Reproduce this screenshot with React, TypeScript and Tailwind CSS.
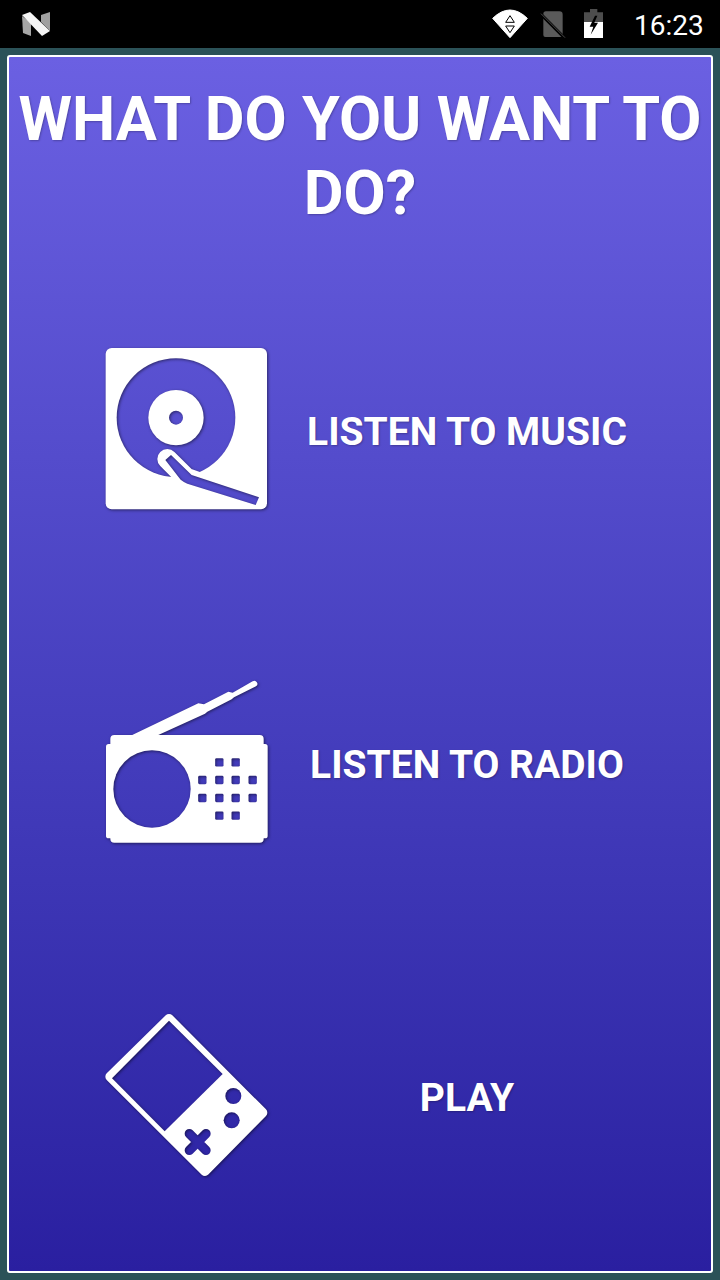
const ROBOTO = { fontFamily: 'Roboto, sans-serif' };

function StatusIcons() {
  return (
    <svg width="240" height="48" viewBox="0 0 720 144" className="absolute right-0 top-0">
      {/* wifi */}
      <path d="M38 55 Q90 5 142 55 L90 113 Z" fill="#fff" stroke="#fff" strokeWidth="3" strokeLinejoin="round" />
      <path d="M90 47 L103 67 H77 Z M77 78 H103 L90 98 Z" fill="none" stroke="#000" strokeWidth="3" />
      {/* no sim */}
      <path d="M190 42 a8 8 0 0 1 8 -8 H238 a10 10 0 0 1 10 10 V105 a6 6 0 0 1 -6 6 H196 a6 6 0 0 1 -6 -6 Z" fill="#5a5a5a" />
      <path d="M181 41 L255 115" stroke="#000" strokeWidth="9" />
      <path d="M183 41 L255 113" stroke="#4a4a4a" strokeWidth="3" />
      {/* battery */}
      <path d="M312 37 H330 V27 H352 V37 H369 V114 H312 Z" fill="#4d4d4d" />
      <path d="M312 66 H369 V114 H312 Z" fill="#fff" />
      <path d="M345 47 L329 80 H340 L332 104 L354 68 H343 L352 47 Z" fill="#000" />
    </svg>
  );
}

function NLogo() {
  return (
    <svg width="30" height="26" viewBox="0 0 30 26" className="absolute left-[21px] top-[11px]">
      <path d="M1 5 L10 12 V25 L2 22 Z" fill="#a6a6a6" />
      <path d="M1 4 L9 1 L29 20 L21 25 Z" fill="#f5f5f5" />
      <path d="M20 4 L29 1 V20 L20 11 Z" fill="#a0a0a0" />
    </svg>
  );
}

function MusicIcon() {
  return (
    <svg width="165" height="165" viewBox="45 36 495 495" className="shrink-0 drop-shadow-[1px_1px_1.5px_rgba(0,0,0,0.5)]">
      <mask id="deck">
        <rect x="0" y="0" width="600" height="600" fill="#fff" />
        <circle cx="258" cy="248" r="178" fill="#000" />
        <circle cx="258" cy="248" r="83" fill="#fff" />
        <circle cx="258" cy="248" r="21" fill="#000" />
        <path d="M232 372 L288 428 L345 448 L530 510" fill="none" stroke="#fff" strokeWidth="60" strokeLinecap="round" strokeLinejoin="round" />
        <path d="M226 375 L243 360 L305 420 L507 487 L497 510 L292 446 Q282 442 272 434 Z" fill="#000" />
      </mask>
      <rect x="47" y="39" width="484" height="484" rx="18" fill="#fff" mask="url(#deck)" />
    </svg>
  );
}

const GRILLE = [
  [388, 277], [437, 277],
  [337, 330], [388, 330], [437, 330], [488, 330],
  [337, 384], [388, 384], [437, 384], [488, 384],
  [388, 437], [437, 437],
];

function RadioIcon() {
  return (
    <svg width="165" height="165" viewBox="45 30 495 495" className="shrink-0 drop-shadow-[1px_1px_1.5px_rgba(0,0,0,0.5)]">
      <mask id="radio-holes">
        <rect x="0" y="0" width="600" height="600" fill="#fff" />
        <circle cx="186" cy="357" r="116" fill="#000" />
        {GRILLE.map(([x, y]) => (
          <rect key={`${x}-${y}`} x={x - 12.5} y={y - 12.5} width="25" height="25" rx="4" fill="#000" />
        ))}
      </mask>
      <path d="M122 197 L325 100 L342 103 L415 65 L428 68 L488 34 A9 9 0 0 1 498 49 L432 82 L425 88 L352 125 L345 131 L200 197 Z" fill="#fff" />
      <g mask="url(#radio-holes)" fill="#fff">
        <rect x="61" y="195" width="460" height="323" rx="12" />
        <rect x="48" y="222" width="485" height="283" rx="8" />
      </g>
    </svg>
  );
}

function GameIcon() {
  return (
    <svg width="165" height="165" viewBox="45 39 495 495" className="shrink-0 drop-shadow-[1px_1px_1.5px_rgba(0,0,0,0.5)]">
      <mask id="game-holes">
        <rect x="0" y="0" width="600" height="600" fill="#fff" />
        <path d="M237 62 L398 222 L224 394 L66 235 Z" fill="#000" />
        <circle cx="430" cy="288" r="24" fill="#000" />
        <circle cx="425" cy="361" r="24" fill="#000" />
        <path d="M298 401 L348 451 M348 401 L298 451" stroke="#000" strokeWidth="28" strokeLinecap="round" />
      </mask>
      <path d="M237 56 L518 338 L345 514 L60 230 Z" fill="#fff" stroke="#fff" strokeWidth="28" strokeLinejoin="round" mask="url(#game-holes)" />
    </svg>
  );
}

const ROWS = [
  { label: 'LISTEN TO MUSIC', Icon: MusicIcon },
  { label: 'LISTEN TO RADIO', Icon: RadioIcon },
  { label: 'PLAY', Icon: GameIcon },
];

export default function App() {
  return (
    <div className="flex h-[1280px] w-[720px] flex-col overflow-hidden" style={ROBOTO}>
      <div className="relative h-12 shrink-0 bg-black">
        <NLogo />
        <StatusIcons />
        <span className="absolute left-[634px] top-[8px] text-[28px] leading-[36px] text-white">16:23</span>
      </div>

      <div className="flex-1 bg-[#2b5258] p-[7px]">
        <div className="h-full rounded-[3px] border-2 border-white bg-gradient-to-b from-[#6b60e2] to-[#2a1fa0]">
          <h1 className="pt-[25px] text-center text-[61.2px] font-bold leading-[74px] text-white [text-shadow:1px_1px_2px_rgba(0,0,0,0.25)]">
            WHAT DO YOU WANT TO DO?
          </h1>
          <div className="mt-[117px] flex flex-col gap-[168px] pl-24 pr-[47px]">
            {ROWS.map(({ label, Icon }) => (
              <div key={label} className="flex items-center">
                <Icon />
                <span className="flex-1 pt-1.5 text-center text-[39px] font-bold text-white [text-shadow:1px_1px_2px_rgba(0,0,0,0.25)]">
                  {label}
                </span>
              </div>
            ))}
          </div>
        </div>
      </div>
    </div>
  );
}
